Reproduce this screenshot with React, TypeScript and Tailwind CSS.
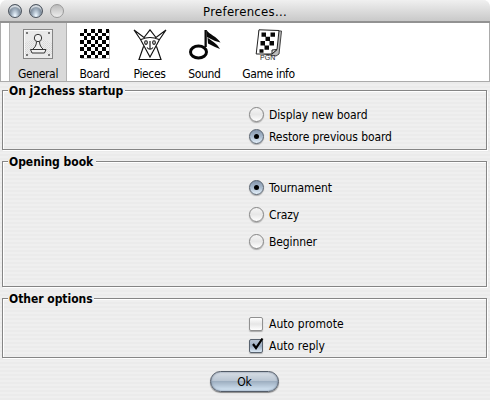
import type { ReactNode } from 'react';

function PawnIcon() {
  return (
    <svg width="30" height="31" viewBox="0 0 30 31" fill="none">
      <defs>
        <pattern id="grain" width="2" height="2" patternUnits="userSpaceOnUse">
          <rect width="2" height="2" fill="#ececec" />
          <rect width="1" height="1" fill="#d8d8d8" />
          <rect x="1" y="1" width="1" height="1" fill="#dedede" />
        </pattern>
      </defs>
      <rect x=".5" y=".5" width="29" height="29" fill="#e9e9e9" stroke="#858585" />
      <path d="M1 14L11 10v9L6 26H1zM29 14l-10-4v9l5 7h5z" fill="url(#grain)" />
      <path d="M1.5 28.5v-27h27" stroke="#fafafa" />
      <g fill="#777">
        <rect x="3" y="3" width="2" height="2" /><rect x="25" y="3" width="2" height="2" />
        <rect x="3" y="25" width="2" height="2" /><rect x="25" y="25" width="2" height="2" />
      </g>
      <path d="M13.500 12.500c0 3.500-1.500 6-4 8h11c-2.500-2-4-4.500-4-8zM7.500 20.500h15.500l-1.500 3.500h-12.500z" fill="#f0f0f0" stroke="#333" />
      <circle cx="15" cy="9" r="3.700" fill="#f0f0f0" stroke="#333" />
    </svg>
  );
}

const boardEdges = [0, 4, 7, 11, 15, 18, 22, 26, 29];

function BoardIcon() {
  return (
    <svg width="29" height="31" viewBox="0 0 29 31" className="overflow-visible">
      <rect x="1" y="1" width="29" height="29" fill="#bdbdbd" />
      <rect width="29" height="29" fill="#fff" />
      {Array.from({ length: 64 }, (_, i) => {
        const x = i % 8;
        const y = Math.floor(i / 8);
        return (x + y) % 2 ? (
          <rect key={i} x={boardEdges[x]} y={boardEdges[y]} width={boardEdges[x + 1] - boardEdges[x]} height={boardEdges[y + 1] - boardEdges[y]} shapeRendering="geometricPrecision" />
        ) : null;
      })}
    </svg>
  );
}

function PiecesIcon() {
  return (
    <svg width="34" height="32" viewBox="0 0 34 32" fill="none" stroke="#111" strokeWidth="1.15">
      <path d="M7.500 10.500L1 1l10 7.500L17 .8l6 7.700L33 1l-6.500 9.500L17 28zM8 10.500Q17 6.500 26 10.500M10.500 17.500L6 30.500h22L23.500 17.500" />
      <ellipse cx="13" cy="13.500" rx="1.300" ry="1.800" />
      <ellipse cx="21" cy="13.500" rx="1.300" ry="1.800" />
      <path d="M17 12v8M14 18.500q3 3.500 6 0" />
    </svg>
  );
}

function SoundIcon() {
  return (
    <svg width="32" height="32" viewBox="0 0 32 32">
      <ellipse cx="9.500" cy="23" rx="8" ry="6" fill="none" stroke="#050505" strokeWidth="3" />
      <path d="M15.500 1h2.300v17h-2.300z" fill="#080808" />
      <path d="M17.500 1C20 5.500 28 7.500 31.500 13.500L26 12 18 8zM18.500 8.500C21 11 28 14 31 20L26 18 19 14.500z" fill="#080808" />
    </svg>
  );
}

function GameIcon() {
  return (
    <svg width="28" height="32" viewBox="0 0 28 32" fill="none">
      <path d="M4 1.500L26.500 2 24 25l-3 2-17-3z" fill="#bbb" stroke="#444" />
      <path d="M4 .8l20 .7-2 19-5 4.500H1.200z" fill="#fff" stroke="#222" />
      <path d="M22 20.500l-5 .5v4z" fill="#ddd" stroke="#222" />
      <path d="M6.500 3.500h4.500v4.300H6.500zM15.500 3.500H20v4.300h-4.500zM10.500 7.800H15v4.300h-4.500zM5.500 12.100H10v4.300H5.500zM14.500 12.100H19v4.300h-4.500zM9.500 16.400H14v4.300H9.500zM4.500 20.200h4v3.600h-4z" fill="#080808" />
      <text x="5" y="31" fontSize="7" fontFamily="Liberation Sans, sans-serif" textLength="15" fill="#222">PGN</text>
    </svg>
  );
}

function ToolItem({ label, width, active, children }: { label: string; width: string; active?: boolean; children: ReactNode }) {
  return (
    <button className={`flex h-[58px] shrink-0 flex-col items-center pt-[6px] ${width} ${active ? 'border-x border-[#b3b3b3] bg-[#d9d9d9]' : ''}`}>
      <span className="flex h-8 items-start justify-center">{children}</span>
      <span className="mt-[6px] h-[14px] leading-[15px] whitespace-nowrap">{label}</span>
    </button>
  );
}

function Group({ title, height, width, children }: { title: string; height: string; width: string; children: ReactNode }) {
  return (
    <section className={`relative ml-[2px] w-[485px] border border-[#858585] shadow-[1px_1px_0_#fff,inset_1px_1px_0_#fff] ${height}`}>
      <h2 className={`absolute -top-[7px] left-[5px] h-[15px] bg-[#ededed] pl-px text-[12px] leading-[15px] font-bold tracking-[-0.03px] whitespace-nowrap ${width}`}>{title}</h2>
      {children}
    </section>
  );
}

function Radio({ label, checked }: { label: string; checked?: boolean }) {
  return (
    <label className="flex h-[15px] items-center gap-[5px]">
      <span className={`flex size-[15px] items-center justify-center rounded-full border shadow-[0_1px_1px_#aaa] ${checked ? 'border-[#59636f] bg-linear-to-b from-[#8495ab] via-[#a9bacd] to-[#e5f1fb]' : 'border-[#858585] bg-linear-to-b from-[#f5f5f5] via-[#e7e7e7] to-white'}`}>
        {checked && <span className="size-[5px] rounded-full bg-black" />}
      </span>
      <span className="pt-[2px] leading-[15px] tracking-[-0.1px]">{label}</span>
    </label>
  );
}

function Check({ label, checked }: { label: string; checked?: boolean }) {
  return (
    <label className="flex h-[15px] items-center gap-[6px]">
      <span className={`relative size-[14px] rounded-[2px] border shadow-[0_1px_1px_#aaa] ${checked ? 'border-[#59636f] bg-linear-to-b from-[#b8c4d2] via-[#9caec2] to-[#dce9f5]' : 'border-[#909090] bg-linear-to-b from-white via-[#e6e6e6] to-white'}`}>
        {checked && (
          <svg className="absolute -top-[3px] left-0" width="15" height="15" viewBox="0 0 15 15" fill="none">
            <path d="M3 7l3 4L12.500 1.500" stroke="#000" strokeWidth="2.200" />
          </svg>
        )}
      </span>
      <span className="pt-[2px] leading-[15px] tracking-[0.05px]">{label}</span>
    </label>
  );
}

function WindowDot({ disabled }: { disabled?: boolean }) {
  return <span className={`size-[14px] rounded-full border ${disabled ? 'border-[#999] bg-linear-to-b from-[#bbb] to-[#ededed]' : 'border-[#4c535d] bg-[radial-gradient(ellipse_at_50%_90%,#e8f3fc_5%,#a5b4c3_40%,#526070_90%)] shadow-[inset_0_2px_1px_#dbe0e5]'}`} />;
}

export default function App() {
  return (
    <div className="h-[400px] w-[490px] overflow-hidden bg-white">
      <main className="h-[400px] w-[490px] overflow-hidden rounded-t-[7px] bg-[repeating-linear-gradient(to_bottom,#efefef_0_2px,#ebebeb_2px_4px)] font-['DejaVu_Sans_Condensed','DejaVu_Sans',sans-serif] text-[12px] tracking-[-0.35px] text-black [font-stretch:condensed]">
        <header className="grid h-[23px] grid-cols-[120px_1fr_120px] border-b-2 border-[#929292] bg-linear-to-b from-[#f0f0f0] to-[#c9c9c9]">
          <div className="flex gap-[7px] pt-[4px] pl-[8px]">
            <WindowDot /><WindowDot /><WindowDot disabled />
          </div>
          <h1 className="pt-[3px] text-center text-[13px] leading-[17px] tracking-[0.28px]">Preferences...</h1>
        </header>
        <nav className="flex h-[59px] border-x border-b border-[#ababab] bg-white pl-[8px]">
          <ToolItem label="General" width="w-[58px]" active><PawnIcon /></ToolItem>
          <ToolItem label="Board" width="w-[55px]"><BoardIcon /></ToolItem>
          <ToolItem label="Pieces" width="w-[55px]"><PiecesIcon /></ToolItem>
          <ToolItem label="Sound" width="w-[55px]"><SoundIcon /></ToolItem>
          <ToolItem label="Game info" width="w-[73px]"><GameIcon /></ToolItem>
        </nav>
        <div className="flex flex-col gap-[11px] pt-[8px]">
          <Group title="On j2chess startup" height="h-[60px]" width="w-[117px]">
            <div className="flex flex-col gap-[7px] pt-[16px] pl-[246px]">
              <Radio label="Display new board" /><Radio label="Restore previous board" checked />
            </div>
          </Group>
          <Group title="Opening book" height="h-[126px]" width="w-[88px]">
            <div className="flex flex-col gap-[12px] pt-[18px] pl-[246px]">
              <Radio label="Tournament" checked /><Radio label="Crazy" /><Radio label="Beginner" />
            </div>
          </Group>
          <Group title="Other options" height="h-[60px]" width="w-[86px]">
            <div className="flex flex-col gap-[7px] pt-[17px] pl-[246px]">
              <Check label="Auto promote" /><Check label="Auto reply" checked />
            </div>
          </Group>
        </div>
        <footer className="flex justify-center pt-[13px] pr-[1px]">
          <button className="h-[21px] w-[69px] rounded-full border border-[#535c68] bg-[linear-gradient(to_bottom,#d9dfe6_0%,#bac6d3_45%,#9eafc1_50%,#d7e8f7_100%)] pt-px leading-[18px] tracking-[0] shadow-[0_1px_1px_#888,inset_0_0_2px_#64748b]">Ok</button>
        </footer>
      </main>
    </div>
  );
}
